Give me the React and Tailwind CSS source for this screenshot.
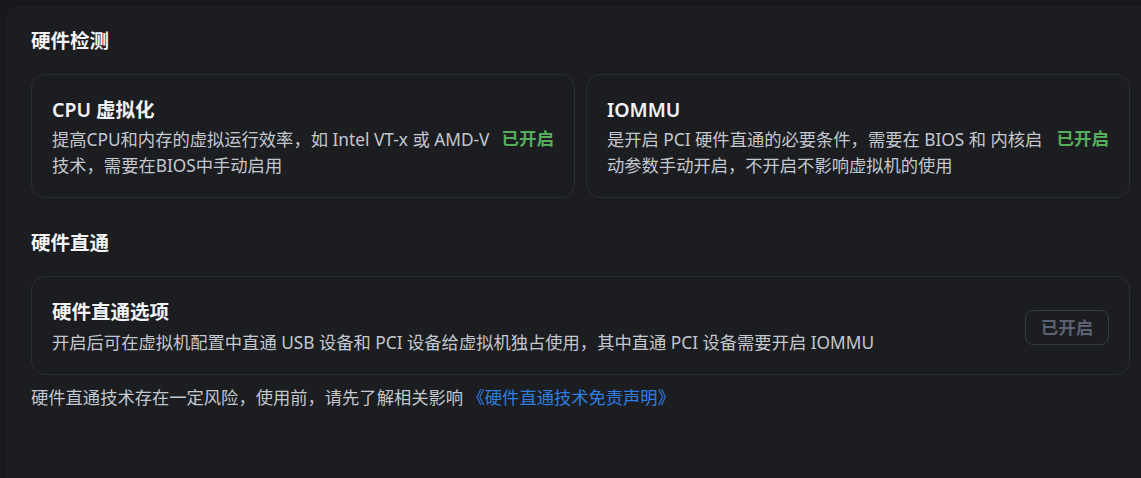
import React from "react";

const font = { fontFamily: '"Noto Sans", "Noto Sans CJK SC", sans-serif' };

function Status() {
  return (
    <span className="shrink-0 text-[17.5px] font-bold leading-[26px] text-[#55ad5b]">
      已开启
    </span>
  );
}

function CheckCard({ title, lines }) {
  return (
    <div className="flex items-center gap-[10px] rounded-[14px] border border-[#2a2d32] pt-[22px] pb-[18px] px-[20px]">
      <div className="flex-1 min-w-0">
        <div className="text-[19.5px] font-semibold leading-[26px] text-[#f2f3f5]">
          {title}
        </div>
        <div className="mt-[4px] text-[17.3px] leading-[26px] text-[#c3c7ce]">
          {lines.map((l, i) => (
            <div key={i} className="whitespace-nowrap">
              {l}
            </div>
          ))}
        </div>
      </div>
      <Status />
    </div>
  );
}

export default function App() {
  return (
    <div
      className="w-[1141px] h-[478px] overflow-hidden bg-[#16181b] pl-[6px] pt-[6px]"
      style={font}
    >
      <div className="w-[1149px] h-[520px] rounded-tl-[10px] bg-[#1b1d21] pl-[25px] pr-[25px] pt-[22px]">
        {/* 硬件检测 */}
        <h2 className="text-[19.5px] font-bold leading-[26px] text-[#f2f3f5]">
          硬件检测
        </h2>
        <div className="mt-[20px] grid grid-cols-2 gap-[11px]">
          <CheckCard
            title="CPU 虚拟化"
            lines={[
              "提高CPU和内存的虚拟运行效率，如 Intel VT-x 或 AMD-V",
              "技术，需要在BIOS中手动启用",
            ]}
          />
          <CheckCard
            title="IOMMU"
            lines={[
              "是开启 PCI 硬件直通的必要条件，需要在 BIOS 和 内核启",
              "动参数手动开启，不开启不影响虚拟机的使用",
            ]}
          />
        </div>

        {/* 硬件直通 */}
        <h2 className="mt-[32px] text-[19.5px] font-bold leading-[26px] text-[#f2f3f5]">
          硬件直通
        </h2>
        <div className="mt-[20px] flex items-center rounded-[14px] border border-[#2a2d32] pt-[22px] pb-[18px] px-[20px]">
          <div className="flex-1 min-w-0">
            <div className="text-[19.5px] font-semibold leading-[26px] text-[#f2f3f5]">
              硬件直通选项
            </div>
            <div className="mt-[5px] text-[17.3px] leading-[26px] text-[#c3c7ce] whitespace-nowrap">
              开启后可在虚拟机配置中直通 USB 设备和 PCI 设备给虚拟机独占使用，其中直通 PCI 设备需要开启 IOMMU
            </div>
          </div>
          <button className="shrink-0 w-[84px] h-[35px] rounded-[8px] border border-[#353a41] text-[17.5px] font-bold text-[#5a6170]">
            已开启
          </button>
        </div>
        <p className="mt-[10px] text-[17.3px] leading-[26px] text-[#c3c7ce]">
          硬件直通技术存在一定风险，使用前，请先了解相关影响{" "}
          <a className="text-[#2f7fe3]">《硬件直通技术免责声明》</a>
        </p>
      </div>
    </div>
  );
}
